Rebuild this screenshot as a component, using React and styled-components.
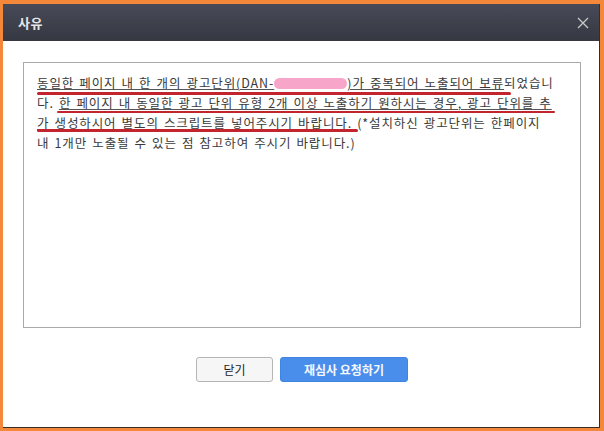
import React from "react";
import styled, { createGlobalStyle } from "styled-components";

const Global = createGlobalStyle`
  html, body { margin: 0; padding: 0; }
  body {
    width: 604px;
    height: 431px;
    background: #f4883a;
    overflow: hidden;
    font-family: "Noto Sans CJK KR", "Noto Sans", sans-serif;
  }
`;

const Frame = styled.div`
  box-sizing: border-box;
  width: 604px;
  height: 431px;
  padding: 4px 4px 3px 3px;
`;

const Dialog = styled.div`
  box-sizing: border-box;
  width: 100%;
  height: 100%;
  background: #fff;
  border-right: 1px solid #3b2b22;
  border-bottom: 1px solid #3b2b22;
  display: flex;
  flex-direction: column;
`;

const Header = styled.div`
  height: 37px;
  flex: none;
  background: linear-gradient(#474b58, #353841);
  display: flex;
  align-items: center;
  justify-content: space-between;
  padding: 0 8px 0 15px;
`;

const Title = styled.h1`
  margin: 0;
  font-size: 13px;
  font-weight: 700;
  color: #e6e6e6;
  letter-spacing: 0.5px;
`;

const CloseButton = styled.button`
  width: 16px;
  height: 16px;
  padding: 0;
  border: 0;
  background: none;
  display: flex;
  align-items: center;
  justify-content: center;
  cursor: pointer;
`;

const Body = styled.div`
  flex: 1;
  display: flex;
  flex-direction: column;
  padding: 21px 18px 0 20px;
`;

const TextBox = styled.div`
  position: relative;
  box-sizing: border-box;
  width: 558px;
  height: 266px;
  border: 1px solid #a9a9a9;
  padding: 10px 8px 0 13px;
  color: #3a3a3a;
  font-size: 12.5px;
  letter-spacing: 0.9px;
  word-spacing: 1.4px;
`;

const Line = styled.div`
  white-space: nowrap;
  line-height: 20px;
  height: 20px;
`;

const Under = styled.span`
  text-decoration: underline;
  text-decoration-thickness: 1px;
  text-underline-offset: 1px;
  text-decoration-color: #555;
`;

const Redact = styled.span`
  display: inline-block;
  width: 73px;
  height: 11px;
  vertical-align: -1px;
  background: #f7a5c9;
  border-radius: 6px;
  filter: blur(0.5px);
`;

const Marker = styled.span`
  position: absolute;
  height: 2.5px;
  border-radius: 2px;
  background: #c3252f;
`;

const Actions = styled.div`
  display: flex;
  justify-content: center;
  gap: 7px;
  margin-top: 29px;
`;

const Button = styled.button`
  box-sizing: border-box;
  height: 25px;
  border-radius: 3px;
  font-family: "Noto Sans CJK KR", "Noto Sans", sans-serif;
  font-size: 12px;
  cursor: pointer;
  ${(p) =>
    p.$primary
      ? `
    width: 128px;
    background: #4a8eec;
    border: 1px solid #3f84e0;
    color: #f4f8ff;
    font-weight: 700;
  `
      : `
    width: 77px;
    background: #f6f6f6;
    border: 1px solid #b5b5b5;
    color: #222;
    font-weight: 400;
  `}
`;

export default function App() {
  return (
    <>
      <Global />
      <Frame>
        <Dialog>
          <Header>
            <Title>사유</Title>
            <CloseButton aria-label="닫기">
              <svg width="12" height="12" viewBox="0 0 12 12">
                <path d="M1 1 L11 11 M11 1 L1 11" stroke="#c8c8c8" strokeWidth="1.3" fill="none" />
              </svg>
            </CloseButton>
          </Header>
          <Body>
            <TextBox>
              <Line>
                <Under>
                  동일한 페이지 내 한 개의 광고단위(DAN-<Redact />)가 중복되어 노출되어 보류
                </Under>
                되었습니
              </Line>
              <Line>
                다. <Under>한 페이지 내 동일한 광고 단위 유형 2개 이상 노출하기 원하시는 경우, 광고 단위를 추</Under>
              </Line>
              <Line>
                <Under>가 생성하시어 별도의 스크립트를 넣어주시기 바랍니다</Under>. (*설치하신 광고단위는 한페이지
              </Line>
              <Line>내 1개만 노출될 수 있는 점 참고하여 주시기 바랍니다.)</Line>
              <Marker style={{ left: 13, top: 29, width: 474 }} />
              <Marker style={{ left: 33, top: 47.5, width: 498 }} />
              <Marker style={{ left: 13, top: 66, width: 321 }} />
            </TextBox>
            <Actions>
              <Button>닫기</Button>
              <Button $primary>재심사 요청하기</Button>
            </Actions>
          </Body>
        </Dialog>
      </Frame>
    </>
  );
}
